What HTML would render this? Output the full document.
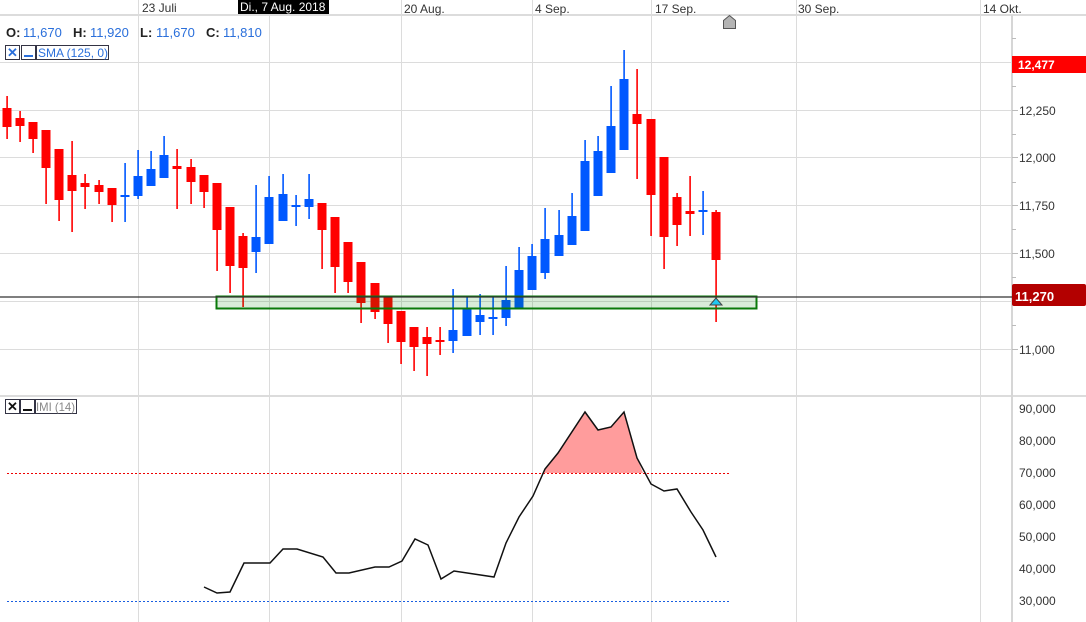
<!DOCTYPE html>
<html><head><meta charset="utf-8"><style>
body{margin:0;width:1086px;height:622px;overflow:hidden;background:#fff;font-family:"Liberation Sans",Arial,sans-serif}
svg{position:absolute;left:0;top:0}
</style></head><body>
<svg id="s" width="1086" height="622" xmlns="http://www.w3.org/2000/svg" font-family="Liberation Sans, Arial, sans-serif">
<g stroke="#dcdcdc" stroke-width="1">
<line x1="138.5" y1="0" x2="138.5" y2="622"/><line x1="269.5" y1="0" x2="269.5" y2="622"/>
<line x1="401.5" y1="0" x2="401.5" y2="622"/><line x1="532.5" y1="0" x2="532.5" y2="622"/>
<line x1="651.5" y1="0" x2="651.5" y2="622"/><line x1="796.5" y1="0" x2="796.5" y2="622"/>
<line x1="980.5" y1="0" x2="980.5" y2="622"/>
<line x1="0" y1="62.5" x2="1012" y2="62.5"/><line x1="0" y1="110.5" x2="1012" y2="110.5"/>
<line x1="0" y1="157.5" x2="1012" y2="157.5"/><line x1="0" y1="205.5" x2="1012" y2="205.5"/>
<line x1="0" y1="253.5" x2="1012" y2="253.5"/><line x1="0" y1="301.5" x2="1012" y2="301.5"/>
<line x1="0" y1="349.5" x2="1012" y2="349.5"/>
</g>
<rect x="0" y="14" width="1086" height="2" fill="#dcdcdc"/>
<rect x="0" y="395" width="1086" height="2" fill="#dcdcdc"/>
<rect x="1011" y="15" width="2" height="607" fill="#d6d6d6"/>
<g font-size="12" fill="#333">
<text x="142" y="12">23 Juli</text><text x="404" y="13">20 Aug.</text><text x="535" y="13">4 Sep.</text>
<text x="655" y="13">17 Sep.</text><text x="798" y="13">30 Sep.</text><text x="983" y="13">14 Okt.</text>
</g>
<rect x="238" y="0" width="91" height="14" fill="#000"/>
<text x="240" y="11" font-size="12" fill="#fff">Di., 7 Aug. 2018</text>
<path d="M723.5 28.5V20.5L729.5 15.5L735.5 20.5V28.5Z" fill="#b4b4b4" stroke="#555"/>
<g id="c"></g>
<rect x="216.5" y="296.5" width="540" height="12" fill="rgba(0,128,0,0.15)" stroke="#0a7a0a" stroke-width="2"/>
<line x1="0" y1="297" x2="1012" y2="297" stroke="#333" stroke-width="1.2"/>
<path d="M710 305L716 298L722 305Z" fill="#20c8f0" stroke="#444" stroke-width="1"/>
<g stroke="#bbb"><line x1="1012" y1="38.5" x2="1016" y2="38.5"/><line x1="1012" y1="86.5" x2="1016" y2="86.5"/><line x1="1012" y1="134.5" x2="1016" y2="134.5"/><line x1="1012" y1="182.5" x2="1016" y2="182.5"/><line x1="1012" y1="229.5" x2="1016" y2="229.5"/><line x1="1012" y1="277.5" x2="1016" y2="277.5"/><line x1="1012" y1="325.5" x2="1016" y2="325.5"/><line x1="1012" y1="110.5" x2="1018" y2="110.5"/><line x1="1012" y1="157.5" x2="1018" y2="157.5"/><line x1="1012" y1="205.5" x2="1018" y2="205.5"/><line x1="1012" y1="253.5" x2="1018" y2="253.5"/><line x1="1012" y1="349.5" x2="1018" y2="349.5"/></g>
<g font-size="12" fill="#333">
<text x="1019" y="115">12,250</text><text x="1019" y="162">12,000</text><text x="1019" y="210">11,750</text>
<text x="1019" y="258">11,500</text><text x="1019" y="354">11,000</text>
<text x="1019" y="413">90,000</text><text x="1019" y="445">80,000</text><text x="1019" y="477">70,000</text>
<text x="1019" y="509">60,000</text><text x="1019" y="541">50,000</text><text x="1019" y="573">40,000</text><text x="1019" y="605">30,000</text>
</g>
<rect x="1012" y="56" width="74" height="17" fill="#ff0000"/>
<text x="1018" y="69" font-size="12" font-weight="bold" fill="#fff">12,477</text>
<rect x="1012" y="284" width="74" height="22" rx="2" fill="#b30000"/>
<text x="1015" y="301" font-size="13" font-weight="bold" fill="#fff">11,270</text>
<g font-size="13">
<text x="6" y="37" fill="#222" font-weight="bold">O:</text><text x="23" y="37" fill="#2a6fdb">11,670</text>
<text x="73" y="37" fill="#222" font-weight="bold">H:</text><text x="90" y="37" fill="#2a6fdb">11,920</text>
<text x="140" y="37" fill="#222" font-weight="bold">L:</text><text x="156" y="37" fill="#2a6fdb">11,670</text>
<text x="206" y="37" fill="#222" font-weight="bold">C:</text><text x="223" y="37" fill="#2a6fdb">11,810</text>
</g>
<rect x="5.5" y="45.5" width="14" height="14" fill="none" stroke="#334"/>
<text x="7" y="57" font-size="13" font-weight="bold" fill="#2a6fdb">✕</text>
<rect x="21.5" y="45.5" width="14" height="14" fill="none" stroke="#334"/>
<rect x="24" y="55" width="9" height="2" fill="#2a6fdb"/>
<rect x="36.5" y="45.5" width="72" height="14" fill="none" stroke="#334"/>
<text x="38" y="57" font-size="12" fill="#2a6fdb">SMA (125, 0)</text>
<rect x="5.5" y="399.5" width="14" height="14" fill="none" stroke="#334"/>
<text x="7" y="411" font-size="13" font-weight="bold" fill="#111">✕</text>
<rect x="20.5" y="399.5" width="14" height="14" fill="none" stroke="#334"/>
<rect x="23" y="409" width="9" height="2" fill="#111"/>
<rect x="35.5" y="399.5" width="41" height="14" fill="none" stroke="#334"/>
<text x="36" y="411" font-size="12" fill="#888" textLength="39" lengthAdjust="spacingAndGlyphs">IMI (14)</text>
<line x1="7" y1="473.5" x2="730" y2="473.5" stroke="#e00" stroke-dasharray="2,2"/>
<line x1="7" y1="601.5" x2="730" y2="601.5" stroke="#1a5fe0" stroke-dasharray="2,2"/>
<path d="M543 473L545 469L558 453L585 412L598 430L611 427L624 412L637 458L643 473Z" fill="#ff9c9c"/>
<polyline fill="none" stroke="#111" stroke-width="1.5" points="204,587 217,593 230,592 244,563 270,563 283,549 297,549 323,557 336,573 349,573 375,567 389,567 402,561 415,539 428,545 441,579 454,571 494,577 506,543 519,517 533,496 545,469 558,453 585,412 598,430 611,427 624,412 637,458 651,484 664,491 677,489 691,512 703,530 716,557"/>
</svg>
<script>
var d=[[7,'r',96,108,127,139],[20,'r',111,118,126,142],[33,'r',122,122,139,153],[46,'r',130,130,168,204],[59,'r',149,149,200,221],[72,'r',141,175,191,232],[85,'r',174,183,187,209],[99,'r',180,185,192,204],[112,'r',188,188,205,222],[125,'b',163,195,197,222],[138,'b',150,176,196,199],[151,'b',151,169,186,186],[164,'b',136,155,178,178],[177,'r',149,166,169,209],[191,'r',159,167,182,204],[204,'r',175,175,192,208],[217,'r',183,183,230,271],[230,'r',207,207,266,293],[243,'r',233,236,268,307],[256,'b',185,237,252,273],[269,'b',176,197,244,244],[283,'b',174,194,221,221],[296,'b',195,205,207,226],[309,'b',174,199,207,219],[322,'r',203,203,230,269],[335,'r',217,217,267,293],[348,'r',242,242,282,293],[361,'r',262,262,303,323],[375,'r',283,283,312,319],[388,'r',297,297,324,343],[401,'r',311,311,342,364],[414,'r',327,327,347,371],[427,'r',327,337,344,376],[440,'r',327,340,342,355],[453,'b',289,330,341,353],[467,'b',297,309,336,336],[480,'b',294,315,322,335],[493,'b',297,317,319,335],[506,'b',266,300,318,326],[519,'b',247,270,308,308],[532,'b',244,256,290,290],[545,'b',208,239,273,279],[559,'b',210,235,256,256],[572,'b',193,216,245,245],[585,'b',140,161,231,231],[598,'b',136,151,196,196],[611,'b',86,126,173,173],[624,'b',50,79,150,150],[637,'r',69,114,124,179],[651,'r',119,119,195,236],[664,'r',157,157,237,269],[677,'r',193,197,225,246],[690,'r',176,211,214,236],[703,'b',191,210,212,235],[716,'r',210,212,260,322]];
var g=document.getElementById('c'),h='';
d.forEach(function(c){var col=c[1]=='r'?'#ff0000':'#0058ff';
h+='<rect x="'+(c[0]-0.7)+'" y="'+c[2]+'" width="1.6" height="'+(c[5]-c[2])+'" fill="'+col+'"/>';
h+='<rect x="'+(c[0]-4.5)+'" y="'+c[3]+'" width="9" height="'+Math.max(2,c[4]-c[3])+'" fill="'+col+'"/>';});
g.innerHTML=h;
</script>
</body></html>
